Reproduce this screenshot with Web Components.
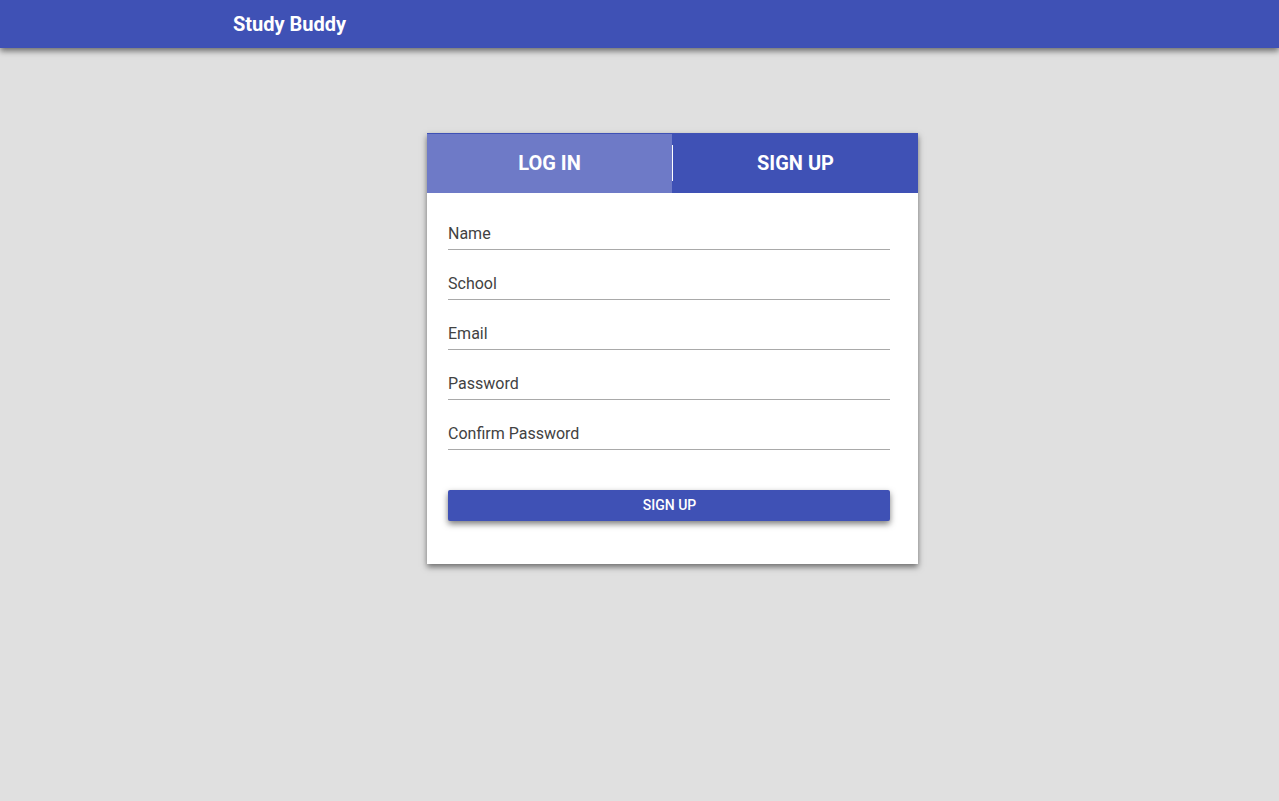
<!DOCTYPE html>
<html lang="en">
<head>
<meta charset="utf-8">
<meta name="viewport" content="width=device-width, initial-scale=1">
<title>Study Buddy</title>
<style>
  html { background: #e0e0e0; }
  body {
    margin: 0;
    font-family: Roboto, "Liberation Sans", sans-serif;
    -webkit-font-smoothing: antialiased;
    --primary: #3f51b5;
    --raised: 0 3px 6px rgba(0, 0, 0, .52);
  }
</style>
</head>
<body>
<study-app></study-app>
<script>
  function define(name, html, setup) {
    const template = document.createElement('template');
    template.innerHTML = html;
    customElements.define(name, class extends HTMLElement {
      connectedCallback() {
        if (this.shadowRoot) return;
        this.attachShadow({ mode: 'open' }).append(template.content.cloneNode(true));
        if (setup) setup(this, this.shadowRoot);
      }
    });
  }

  define('app-toolbar', `
    <style>
      :host { display: block; background: var(--primary); color: #fff; box-shadow: var(--raised); }
      header { display: flex; align-items: center; height: 48px; padding-left: 233px; }
      h1 { margin: 0; font-size: 20px; line-height: 24px; font-weight: 700; }
    </style>
    <header><h1><slot></slot></h1></header>`);

  define('auth-tabs', `
    <style>
      :host { display: block; background: var(--primary); }
      nav { display: grid; grid-template-columns: 1fr 1px 1fr; height: 60px; }
      button {
        border: 0; padding: 0; background: var(--primary); color: #fff; cursor: pointer;
        font: 700 20px/24px Roboto, "Liberation Sans", sans-serif;
      }
      .inactive { background: #6e7ac7; box-shadow: inset 0 1px var(--primary); }
      .divider { background: #fff; margin: 12px 0; }
    </style>
    <nav aria-label="Account">
      <button type="button" class="inactive">LOG IN</button>
      <span class="divider"></span>
      <button type="button" aria-current="true">SIGN UP</button>
    </nav>`);

  define('text-field', `
    <style>
      :host { display: grid; height: 32px; font-size: 16px; line-height: 24px; color: #424242; }
      label, input { grid-area: 1 / 1; }
      label { padding-top: 4px; pointer-events: none; z-index: 1; }
      input {
        box-sizing: border-box; width: 100%; min-width: 0; height: 32px; margin: 0; padding: 0;
        border: 0; border-bottom: 1px solid #a9a9a9; background: none; outline: 0;
        font: inherit; color: inherit;
      }
      input:focus { border-color: var(--primary); }
      label:has(+ input:not(:placeholder-shown)) { visibility: hidden; }
    </style>
    <label for="field"><slot></slot></label>
    <input id="field" placeholder=" ">`,
    (host, root) => { root.querySelector('input').type = host.getAttribute('type') || 'text'; });

  define('raised-button', `
    <style>
      :host { display: block; }
      button {
        display: block; width: 100%; height: 31px; border: 0; border-radius: 2px; padding: 0 0 1px 1px;
        background: var(--primary); color: #fff; box-shadow: var(--raised); cursor: pointer;
        font: 500 14px/16px Roboto, "Liberation Sans", sans-serif;
      }
    </style>
    <button type="button"><slot></slot></button>`);

  define('sign-up-card', `
    <style>
      :host { display: block; width: 100%; max-width: 491px; background: #fff; box-shadow: var(--raised); }
      form { display: grid; gap: 18px; padding: 25px 28px 43px 21px; }
      raised-button { margin-top: 22px; }
    </style>
    <auth-tabs></auth-tabs>
    <form>
      <text-field>Name</text-field>
      <text-field>School</text-field>
      <text-field type="email">Email</text-field>
      <text-field type="password">Password</text-field>
      <text-field type="password">Confirm Password</text-field>
      <raised-button>SIGN UP</raised-button>
    </form>`);

  define('study-app', `
    <style>
      :host { display: block; }
      main { display: flex; justify-content: center; padding: 85px 0 40px 66px; }
    </style>
    <app-toolbar>Study Buddy</app-toolbar>
    <main><sign-up-card></sign-up-card></main>`);
</script>
</body>
</html>
